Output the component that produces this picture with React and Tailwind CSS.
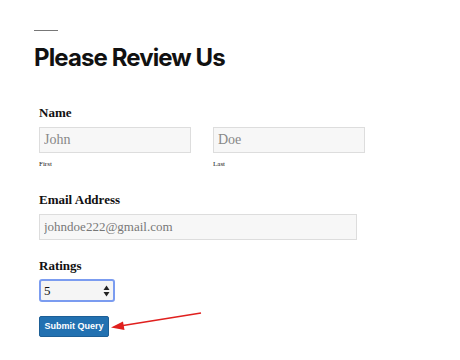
import React from "react";

export default function App() {
  return (
    <div className="relative w-[460px] h-[360px] bg-white overflow-hidden">
      <div className="pl-[34px] pt-[30px]">
        <div className="w-[24px] h-px bg-[#777]" />
        <h1 className="mt-[11px] text-[24px] leading-[32px] font-bold tracking-[-0.9px] text-[#111] [font-family:Inter,sans-serif]">
          Please Review Us
        </h1>
        <form className="ml-[5px] mt-[31px] [font-family:'Liberation_Serif',serif]" onSubmit={(e) => e.preventDefault()}>
          <div className="text-[13px] leading-[16px] font-bold text-[#111]">Name</div>
          <div className="mt-[6px] flex gap-[22px]">
            <div className="flex flex-col">
              <input
                className="w-[152px] h-[26px] border border-[#ddd] bg-[#f7f7f7] px-[4px] text-[14px] text-[#555] placeholder:text-[#888] outline-none [font-family:'Liberation_Serif',serif]"
                placeholder="John"
              />
              <span className="mt-[7px] text-[7px] leading-[9px] text-[#222]">First</span>
            </div>
            <div className="flex flex-col">
              <input
                className="w-[152px] h-[26px] border border-[#ddd] bg-[#f7f7f7] px-[4px] text-[14px] text-[#555] placeholder:text-[#888] outline-none [font-family:'Liberation_Serif',serif]"
                placeholder="Doe"
              />
              <span className="mt-[7px] text-[7px] leading-[9px] text-[#222]">Last</span>
            </div>
          </div>
          <div className="mt-[23px] text-[13px] leading-[16px] font-bold text-[#111]">Email Address</div>
          <input
            className="mt-[6px] w-[318px] h-[26px] border border-[#ddd] bg-[#f7f7f7] px-[4px] text-[13px] text-[#555] placeholder:text-[#777] outline-none [font-family:'Liberation_Serif',serif]"
            placeholder="johndoe222@gmail.com"
          />
          <div className="mt-[18px] text-[13px] leading-[16px] font-bold text-[#111]">Ratings</div>
          <div className="mt-[5px] relative w-[76px] h-[23px] border-2 border-[#7b9cf0] rounded-[3px] bg-[#f5f5f5] flex items-center">
            <span className="pl-[3px] text-[13px] text-[#111] [font-family:'Liberation_Serif',serif]">5</span>
            <svg className="absolute right-[3px] top-[4px]" width="7" height="12" viewBox="0 0 7 12">
              <path d="M3.5 0.5 L6.5 5 L0.5 5 Z" fill="#222" />
              <path d="M3.5 11.5 L6.5 7 L0.5 7 Z" fill="#222" />
            </svg>
          </div>
          <button
            type="submit"
            className="mt-[14px] w-[70px] h-[21px] rounded-[2px] bg-[#2271b1] border border-[#1d5f96] text-white text-[9px] font-semibold [font-family:'Liberation_Sans',Arial,sans-serif] flex items-center justify-center"
          >
            Submit Query
          </button>
        </form>
      </div>
      <svg className="absolute left-0 top-0 pointer-events-none" width="460" height="360">
        <line x1="201" y1="313" x2="120" y2="326" stroke="#e0201e" strokeWidth="1.6" />
        <path d="M111 327.5 L123 321.5 L124.5 330 Z" fill="#e0201e" />
      </svg>
    </div>
  );
}
